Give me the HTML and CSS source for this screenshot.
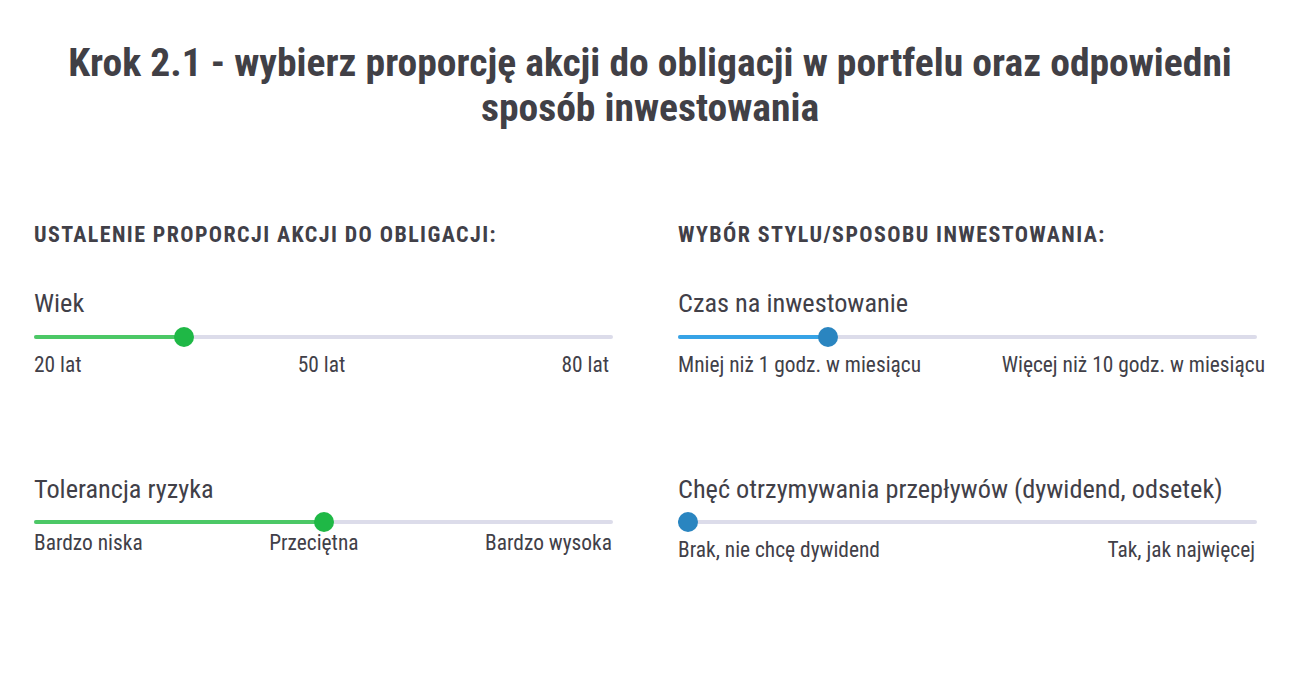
FILE: index.html
```html
<!DOCTYPE html>
<html lang="pl">
<head>
<meta charset="utf-8">
<title>Krok 2.1</title>
<link rel="stylesheet" href="styles.css">
</head>
<body>
<main class="page">
  <h1 class="title">Krok 2.1 - wybierz proporcję akcji do obligacji w portfelu oraz odpowiedni<br>sposób inwestowania</h1>
  <div class="columns">
    <section class="col">
      <h2 class="section-head">Ustalenie proporcji akcji do obligacji:</h2>
      <div class="slider slider-first">
        <div class="slider-label">Wiek</div>
        <div class="track green" style="--p:0.25">
          <div class="fill"></div>
          <div class="thumb"></div>
        </div>
        <div class="ticks ticks-age">
          <span>20 lat</span><span>50 lat</span><span>80 lat</span>
        </div>
      </div>
      <div class="slider slider-second">
        <div class="slider-label">Tolerancja ryzyka</div>
        <div class="track green" style="--p:0.5">
          <div class="fill"></div>
          <div class="thumb"></div>
        </div>
        <div class="ticks ticks-tight">
          <span>Bardzo niska</span><span>Przeciętna</span><span>Bardzo wysoka</span>
        </div>
      </div>
    </section>
    <section class="col">
      <h2 class="section-head">Wybór stylu/sposobu inwestowania:</h2>
      <div class="slider slider-first">
        <div class="slider-label">Czas na inwestowanie</div>
        <div class="track blue" style="--p:0.25">
          <div class="fill"></div>
          <div class="thumb"></div>
        </div>
        <div class="ticks ticks-wide">
          <span>Mniej niż 1 godz. w miesiącu</span><span>Więcej niż 10 godz. w miesiącu</span>
        </div>
      </div>
      <div class="slider slider-second">
        <div class="slider-label">Chęć otrzymywania przepływów (dywidend, odsetek)</div>
        <div class="track blue" style="--p:0">
          <div class="fill"></div>
          <div class="thumb"></div>
        </div>
        <div class="ticks ticks-low">
          <span>Brak, nie chcę dywidend</span><span>Tak, jak najwięcej</span>
        </div>
      </div>
    </section>
  </div>
</main>
</body>
</html>
```
FILE: styles.css
```css
html, body {
  margin: 0;
  padding: 0;
  background: #ffffff;
}

body {
  font-family: "Roboto Condensed", "Roboto", "Liberation Sans Narrow", sans-serif;
  font-stretch: 75%;
  color: #414048;
}

.page {
  width: 1300px;
  height: 700px;
  box-sizing: border-box;
  padding-top: 40px;
}

.title {
  margin: 0;
  text-align: center;
  font-size: 39.6px;
  line-height: 45px;
  font-weight: 700;
  color: #414046;
}

.columns {
  display: grid;
  grid-template-columns: 579px 579px;
  column-gap: 65px;
  padding-left: 34px;
  margin-top: 92px;
}

.section-head {
  margin: 0;
  font-size: 22px;
  line-height: 26px;
  font-weight: 700;
  text-transform: uppercase;
  letter-spacing: 1.4px;
  color: #414048;
}

.slider-first {
  margin-top: 40px;
}

.slider-second {
  margin-top: 96px;
}

.slider-label {
  font-size: 26.3px;
  line-height: 30px;
  font-weight: 400;
}

.track {
  position: relative;
  height: 4px;
  border-radius: 2px;
  background: #dcdcea;
  margin-top: 17px;
}

.slider-second .track {
  margin-top: 16px;
}

.fill {
  height: 100%;
  border-radius: 2px;
  width: calc(10px + (100% - 20px) * var(--p));
}

.thumb {
  position: absolute;
  top: -8px;
  left: calc((100% - 20px) * var(--p));
  width: 20px;
  height: 20px;
  border-radius: 50%;
}

.green .fill { background: #4cc866; }
.green .thumb { background: #1fb846; }
.blue .fill { background: #36a3e6; }
.blue .thumb { background: #2a85c0; }

.ticks {
  display: flex;
  justify-content: space-between;
  margin-top: 13px;
  font-size: 21.4px;
  line-height: 26px;
}

.ticks-age {
  margin-right: 4px;
}

.ticks-tight {
  margin-top: 6px;
  margin-right: 1px;
}

.ticks-wide {
  margin-right: -8px;
}

.ticks-low {
  margin-top: 13px;
  margin-right: 2px;
}
```
